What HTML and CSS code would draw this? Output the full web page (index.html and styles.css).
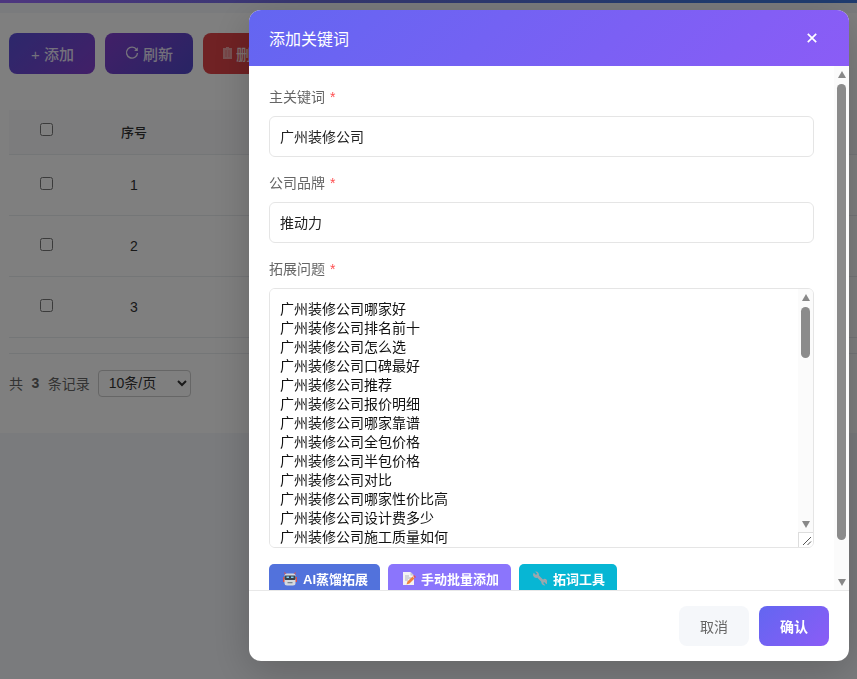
FILE: index.html
```html
<!DOCTYPE html>
<html lang="zh-CN">
<head>
    <meta charset="UTF-8">
    <meta name="viewport" content="width=device-width, initial-scale=1.0">
    <title>关键词管理</title>
    <link rel="stylesheet" href="styles.css">
</head>
<body>
    <div class="top-bar"></div>
    <div class="card">
        <div class="toolbar">
            <button class="tool-btn add">+ 添加</button>
            <button class="tool-btn refresh">
                <svg class="tool-icon" viewBox="0 0 14 14"><path d="M11.600 3.600A5.500 5.500 0 1 0 12.500 7" fill="none" stroke="currentColor" stroke-width="1.400"/><path d="M12.800 1.300v3.700H9.100z" fill="currentColor"/></svg>
                刷新
            </button>
            <button class="tool-btn remove">
                <svg class="trash-icon" viewBox="0 0 9 12"><path d="M3 0h3v1h3v11H0V1h3z" fill="currentColor" opacity="0.6"/><path d="M3 3v7M6 3v7" stroke="#f04a50" stroke-width="0.8" opacity="0.6"/></svg>
                删除
            </button>
        </div>
        <table class="data-table">
            <thead>
                <tr><th class="col-check"><input type="checkbox"></th><th class="col-no">序号</th><th>主关键词</th><th>公司品牌</th><th>操作</th></tr>
            </thead>
            <tbody>
                <tr><td class="col-check"><input type="checkbox"></td><td class="col-no">1</td><td></td><td></td><td></td></tr>
                <tr><td class="col-check"><input type="checkbox"></td><td class="col-no">2</td><td></td><td></td><td></td></tr>
                <tr><td class="col-check"><input type="checkbox"></td><td class="col-no">3</td><td></td><td></td><td></td></tr>
            </tbody>
        </table>
        <div class="pager">
            <span>共</span><strong>3</strong><span>条记录</span>
            <select class="page-size">
                <option>10条/页</option>
                <option>20条/页</option>
                <option>50条/页</option>
            </select>
        </div>
    </div>

    <div class="overlay">
        <div class="modal">
            <div class="modal-header">
                <h3>添加关键词</h3>
                <svg class="close-icon" viewBox="0 0 10 10"><path d="M0.800 0.800l8.400 8.400M9.200 0.800l-8.400 8.400" stroke="#fff" stroke-width="1.700" fill="none"/></svg>
            </div>
            <div class="modal-main">
                <div class="modal-body">
                    <div class="field">
                        <label>主关键词 <span class="req">*</span></label>
                        <input class="text-input" type="text" value="广州装修公司">
                    </div>
                    <div class="field">
                        <label>公司品牌 <span class="req">*</span></label>
                        <input class="text-input" type="text" value="推动力">
                    </div>
                    <div class="field">
                        <label>拓展问题 <span class="req">*</span></label>
                        <div class="area-box">
                            <textarea class="text-area" spellcheck="false">广州装修公司哪家好
广州装修公司排名前十
广州装修公司怎么选
广州装修公司口碑最好
广州装修公司推荐
广州装修公司报价明细
广州装修公司哪家靠谱
广州装修公司全包价格
广州装修公司半包价格
广州装修公司对比
广州装修公司哪家性价比高
广州装修公司设计费多少
广州装修公司施工质量如何</textarea>
                            <div class="scrollbar">
                                <div class="arrow-up"></div>
                                <div class="thumb thumb-area"></div>
                                <div class="track-fill"></div>
                                <div class="arrow-down"></div>
                                <div class="resizer">
                                    <svg viewBox="0 0 14 14"><path d="M4 12l8-8M8.500 12l3.500-3.500" stroke="#555" stroke-width="1" fill="none"/></svg>
                                </div>
                            </div>
                        </div>
                    </div>
                    <div class="expand-row">
                        <button class="expand-btn ai">
                            <svg class="emoji" viewBox="0 0 14 15"><path d="M1.500 0.500l2 3h-2zM12.500 0.500l-2 3h2z" fill="#d9534f"/><rect x="0" y="6" width="2" height="5" fill="#d9534f"/><rect x="12" y="6" width="2" height="5" fill="#d9534f"/><rect x="1.500" y="2.500" width="11" height="12" rx="2.500" fill="#d5d9de"/><rect x="1.500" y="4.500" width="11" height="4.500" rx="1.200" fill="#3a4350"/><rect x="3.500" y="5.500" width="2.500" height="1.500" fill="#7fd0f5"/><rect x="8" y="5.500" width="2.500" height="1.500" fill="#7fd0f5"/><rect x="4.500" y="11" width="5" height="1.300" fill="#7a8591"/></svg>
                            AI蒸馏拓展
                        </button>
                        <button class="expand-btn manual">
                            <svg class="emoji" viewBox="0 0 14 15"><path d="M1 1h7.500L12 4.500V14H1z" fill="#f3f3f3"/><path d="M8.500 1L12 4.500H8.500z" fill="#c8c8d0"/><path d="M3 5h4M3 7h6M3 9h3" stroke="#a5a5b2" stroke-width="0.800"/><path d="M4.500 13.500l1-3 5-5 2 2-5 5z" fill="#f0803c"/><path d="M11 5l1-1 2 2-1 1z" fill="#e8505b"/></svg>
                            手动批量添加
                        </button>
                        <button class="expand-btn tools">
                            <svg class="emoji" viewBox="0 0 14 15"><path d="M4 4.500l6.500 6.500" stroke="#9aa7ad" stroke-width="2.600"/><path d="M0.800 1.800l2.200 2.200 1.200-1.200-2-2.300a3.200 3.200 0 0 1 3.400 4.600L3.600 7A3.200 3.200 0 0 1 0.800 1.800z" fill="#9aa7ad"/><path d="M13.500 13.200l-2.300-2.300-1.100 1.200 2.200 2.200a3.100 3.100 0 0 1-3.600-4.400l2-2a3.100 3.100 0 0 1 2.800 5.300z" fill="#9aa7ad"/></svg>
                            拓词工具
                        </button>
                    </div>
                </div>
                <div class="scrollbar">
                    <div class="arrow-up"></div>
                    <div class="thumb thumb-body"></div>
                    <div class="track-fill"></div>
                    <div class="arrow-down"></div>
                </div>
            </div>
            <div class="modal-footer">
                <button class="footer-btn cancel">取消</button>
                <button class="footer-btn confirm">确认</button>
            </div>
        </div>
    </div>
</body>
</html>
```

FILE: styles.css
```css
* {
    box-sizing: border-box;
}
body {
    margin: 0;
    min-height: 100vh;
    background: #f5f7fa;
    font-family: "Liberation Sans", "Noto Sans CJK SC", sans-serif;
    font-size: 14px;
    color: #333;
    overflow: hidden;
}
button {
    font-family: inherit;
    border: none;
}
.top-bar {
    height: 3px;
    background: linear-gradient(90deg, #9b6cff 0%, #6a6fe0 40%, #3f78e0 85%);
}
.card {
    margin-top: 10px;
    height: 420px;
    padding: 20px 0 0 9px;
    background: #fff;
}
.toolbar {
    display: flex;
    gap: 10px;
    margin-bottom: 36px;
}
.tool-btn {
    display: flex;
    align-items: center;
    justify-content: center;
    gap: 4px;
    height: 41px;
    border-radius: 8px;
    color: rgba(255, 255, 255, 0.85);
    font-size: 15px;
    font-weight: 500;
}
.tool-btn.add {
    width: 86px;
    padding: 0 0 0 1px;
    background: linear-gradient(135deg, #5a50d8 0%, #8440d0 100%);
}
.tool-btn.refresh {
    width: 88px;
    padding-bottom: 2px;
    background: linear-gradient(135deg, #8440d0 0%, #5048c8 100%);
}
.tool-btn.remove {
    width: 90px;
    padding: 0 0 1px 20px;
    justify-content: flex-start;
    background: #e04448;
}
.tool-icon {
    width: 14px;
    height: 14px;
}
.trash-icon {
    width: 9px;
    height: 12px;
}
.data-table {
    width: 848px;
    border-collapse: collapse;
    table-layout: fixed;
}
.data-table th {
    height: 44px;
    background: #f8f9fa;
    font-size: 13px;
    font-weight: 500;
    border-bottom: 1px solid #e9ecef;
}
.data-table td {
    height: 61px;
    text-align: center;
    border-bottom: 1px solid #e9ecef;
}
.col-check {
    width: 75px;
}
.col-no {
    width: 100px;
}
.data-table input {
    display: block;
    margin: 0 auto 3px;
    width: 13px;
    height: 13px;
}
.data-table th input {
    margin-bottom: 4px;
}
.pager {
    display: flex;
    align-items: center;
    gap: 8px;
    margin-top: 15px;
    padding-top: 16px;
    border-top: 1px solid #e9ecef;
    color: #666;
}
.pager strong {
    margin: 0 0.5px;
}
.page-size {
    height: 27px;
    width: 93px;
    padding: 0 6px;
    font-family: inherit;
    font-size: 14px;
    color: #333;
    background: #fff;
    border: 1px solid #ccc;
    border-radius: 4px;
}
.overlay {
    position: fixed;
    inset: 0;
    display: flex;
    justify-content: flex-end;
    align-items: flex-start;
    padding: 10px 8px 0 0;
    background: rgba(0, 0, 0, 0.5);
}
.modal {
    display: flex;
    flex-direction: column;
    width: 600px;
    height: 651px;
    background: #fff;
    border-radius: 12px;
    overflow: hidden;
    box-shadow: 0 10px 40px rgba(0, 0, 0, 0.2);
}
.modal-header {
    display: flex;
    justify-content: space-between;
    align-items: center;
    flex: none;
    height: 56px;
    padding: 0 32px 0 20px;
    background: linear-gradient(135deg, #6366f1 0%, #8b5cf6 100%);
    color: #fff;
}
.modal-header h3 {
    margin: 0;
    font-size: 16px;
    font-weight: 400;
}
.close-icon {
    width: 10px;
    height: 10px;
}
.modal-main {
    display: flex;
    flex: 1;
    min-height: 0;
}
.modal-body {
    flex: 1;
    min-width: 0;
    padding: 20px;
    overflow: hidden;
}
.scrollbar {
    display: flex;
    flex-direction: column;
    align-items: center;
    flex: none;
    width: 15px;
    background: #fbfbfb;
}
.arrow-up,
.arrow-down {
    flex: none;
    width: 0;
    height: 0;
    border-left: 4.5px solid transparent;
    border-right: 4.5px solid transparent;
}
.arrow-up {
    margin: 5px 0 6px;
    border-bottom: 7px solid #888;
}
.arrow-down {
    margin: 5px 0 4px;
    border-top: 7px solid #888;
}
.thumb {
    flex: none;
    width: 9px;
    background: #8b8b8b;
    border-radius: 5px;
}
.thumb-body {
    height: 456px;
}
.thumb-area {
    height: 51px;
}
.track-fill {
    flex: 1;
}
.resizer {
    flex: none;
    width: 15px;
    height: 15px;
    background: #fff;
    border-top: 1px solid #ddd;
    border-left: 1px solid #ddd;
}
.resizer svg {
    display: block;
    width: 14px;
    height: 14px;
}
.field {
    margin-bottom: 15px;
}
.field label {
    display: block;
    height: 22px;
    margin-bottom: 8px;
    line-height: 22px;
    color: #666;
}
.req {
    margin-left: 1px;
    color: #ff4d4f;
}
.text-input {
    display: block;
    width: 100%;
    height: 41px;
    padding: 0 10px 2px;
    font-family: inherit;
    font-size: 14px;
    color: #222;
    border: 1px solid #e5e5e5;
    border-radius: 6px;
}
.area-box {
    display: flex;
    height: 260px;
    border: 1px solid #e5e5e5;
    border-radius: 6px;
    overflow: hidden;
}
.text-area {
    flex: 1;
    min-width: 0;
    padding: 11px 10px 0;
    font-family: inherit;
    font-size: 14px;
    line-height: 19px;
    color: #111;
    border: none;
    outline: none;
    resize: none;
    overflow: hidden;
}
.expand-row {
    display: flex;
    gap: 8px;
    margin-top: 16px;
}
.expand-btn {
    display: flex;
    align-items: center;
    gap: 6px;
    flex: none;
    height: 38px;
    padding: 0 0 10px 14px;
    border-radius: 5px;
    color: #fff;
    font-size: 13px;
    font-weight: 700;
    white-space: nowrap;
}
.expand-btn.ai {
    width: 111px;
    background: #5272dc;
}
.expand-btn.manual {
    width: 123px;
    gap: 5px;
    background: #8b75fc;
}
.expand-btn.tools {
    width: 98px;
    background: #07b6d4;
}
.emoji {
    flex: none;
    width: 14px;
    height: 15px;
}
.modal-footer {
    display: flex;
    justify-content: flex-end;
    gap: 10px;
    flex: none;
    height: 71px;
    padding: 15px 20px 0;
    border-top: 1px solid #e8e8e8;
}
.footer-btn {
    width: 70px;
    height: 40px;
    padding: 0 0 1px;
    border-radius: 8px;
    font-size: 14px;
}
.footer-btn.cancel {
    background: #f5f7fa;
    color: #666;
}
.footer-btn.confirm {
    background: linear-gradient(135deg, #6366f1 0%, #8b5cf6 100%);
    color: #fff;
    font-weight: 700;
}
```
